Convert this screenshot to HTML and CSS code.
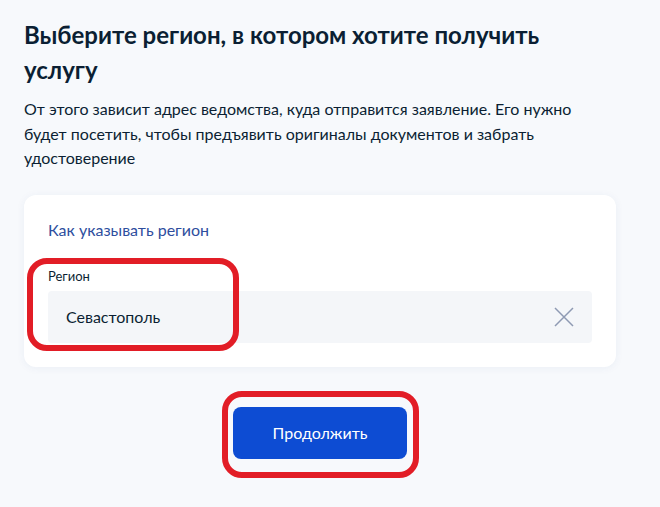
FILE: index.html
```html
<!DOCTYPE html>
<html lang="ru">
<head>
    <meta charset="UTF-8">
    <title>Выбор региона</title>
    <link rel="stylesheet" href="styles.css">
</head>
<body>
    <div class="page">
        <h1 class="title">Выберите регион, в котором хотите получить услугу</h1>
        <p class="lead">От этого зависит адрес ведомства, куда отправится заявление. Его нужно будет посетить, чтобы предъявить оригиналы документов и забрать удостоверение</p>

        <div class="card">
            <a class="link" href="#">Как указывать регион</a>
            <div class="label">Регион</div>
            <div class="field">
                <span class="field-value">Севастополь</span>
                <svg class="clear" width="20" height="20" viewBox="0 0 20 20">
                    <path d="M1 1 L19 19 M19 1 L1 19" stroke="#8e9ab3" stroke-width="1.5" fill="none"/>
                </svg>
            </div>
        </div>

        <div class="actions">
            <button class="btn">Продолжить</button>
        </div>
    </div>

    <div class="mark mark-field"></div>
    <div class="mark mark-btn"></div>
</body>
</html>
```

FILE: styles.css
```css
body {
    margin: 0;
    background: #f7f9fc;
    font-family: Lato, "Open Sans", sans-serif;
    color: #0b1f33;
}

.page {
    width: 592px;
    padding: 17px 24px 0;
}

.title {
    margin: 0;
    font-size: 24px;
    line-height: 35px;
    font-weight: 700;
}

.lead {
    margin: 10px 0 0;
    font-size: 16px;
    line-height: 24.5px;
}

.card {
    margin-top: 24px;
    background: #fff;
    border-radius: 12px;
    padding: 23px 24px 24px;
    box-shadow: 0 1px 8px rgba(30, 60, 140, 0.06);
}

.link {
    display: block;
    color: #2e4e9e;
    text-decoration: none;
    font-size: 16px;
    line-height: 24px;
}

.label {
    margin-top: 26px;
    font-size: 13px;
    line-height: 16px;
}

.field {
    margin-top: 7px;
    height: 52px;
    background: #f4f6f9;
    border-radius: 4px;
    display: flex;
    align-items: center;
    justify-content: space-between;
    padding: 0 18px;
}

.field-value {
    font-size: 16px;
}

.actions {
    display: flex;
    justify-content: center;
    margin-top: 40px;
}

.btn {
    width: 174px;
    height: 52px;
    border: none;
    border-radius: 8px;
    background: #0d4cd3;
    color: #fff;
    font-family: inherit;
    font-size: 16px;
    cursor: pointer;
}

.mark {
    position: absolute;
    border: 6px solid #e21d26;
    border-radius: 20px;
    box-sizing: border-box;
}

.mark-field {
    left: 27px;
    top: 258px;
    width: 212px;
    height: 93px;
}

.mark-btn {
    left: 222px;
    top: 391px;
    width: 197px;
    height: 87px;
}
```
